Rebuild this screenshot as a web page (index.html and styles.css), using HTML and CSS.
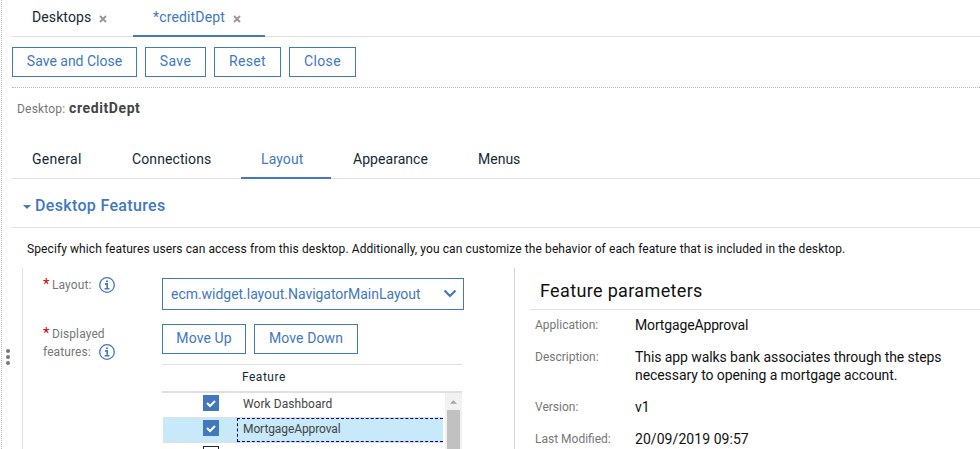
FILE: index.html
```html
<!DOCTYPE html>
<html lang="en">
<head>
<meta charset="utf-8">
<title>Desktops</title>
<link rel="stylesheet" href="styles.css">
</head>
<body>
<div class="app">
  <aside class="splitter"><i></i><i></i><i></i></aside>
  <main class="content">
    <nav class="doc-tabs">
      <a class="doc-tab"><span>Desktops</span><svg class="x" viewBox="0 0 8 8"><path d="M1 1l6 6M7 1L1 7"/></svg></a>
      <a class="doc-tab active"><span>*creditDept</span><svg class="x" viewBox="0 0 8 8"><path d="M1 1l6 6M7 1L1 7"/></svg></a>
    </nav>
    <div class="toolbar">
      <button class="btn w-sac">Save and Close</button>
      <button class="btn w-save">Save</button>
      <button class="btn w-reset">Reset</button>
      <button class="btn w-reset">Close</button>
    </div>
    <div class="title"><span class="label">Desktop:</span><b>creditDept</b></div>
    <nav class="tabs">
      <a class="general">General</a>
      <a class="connections">Connections</a>
      <a class="layout active">Layout</a>
      <a class="appearance">Appearance</a>
      <a class="menus">Menus</a>
    </nav>
    <h2 class="section"><svg viewBox="0 0 8 4"><path d="M0 0h8L4 4z"/></svg><span>Desktop Features</span></h2>
    <p class="intro">Specify which features users can access from this desktop. Additionally, you can customize the behavior of each feature that is included in the desktop.</p>
    <div class="panels">
      <section class="left">
        <div class="field">
          <div class="label field-label"><em>*</em>Layout:<svg class="info" viewBox="0 0 16 16"><circle cx="8" cy="8" r="7.3"/><path d="M6 6.9h2.2v4.6M5.6 11.7h4.8M7 4.2h2"/></svg></div>
          <div class="select"><span>ecm.widget.layout.NavigatorMainLayout</span><svg viewBox="0 0 14 9"><path d="M1.5 1.5L7 7l5.500-5.500"/></svg></div>
        </div>
        <div class="field features">
          <div class="label field-label"><em>*</em>Displayed<br>features:<svg class="info" viewBox="0 0 16 16"><circle cx="8" cy="8" r="7.3"/><path d="M6 6.9h2.2v4.6M5.6 11.7h4.8M7 4.2h2"/></svg></div>
          <div class="control">
            <div class="moves"><button class="btn w-up">Move Up</button><button class="btn w-down">Move Down</button></div>
            <div class="table">
              <div class="thead">Feature</div>
              <div class="tbody">
                <div class="rows">
                  <div class="row"><span class="check on"><svg viewBox="0 0 16 16"><path d="M4 8l3 3 5-5"/></svg></span><span class="cell">Work Dashboard</span></div>
                  <div class="row selected"><span class="check on"><svg viewBox="0 0 16 16"><path d="M4 8l3 3 5-5"/></svg></span><span class="cell app-name">MortgageApproval</span></div>
                  <div class="row"><span class="check"></span><span class="cell"></span></div>
                </div>
                <div class="scrollbar"><svg viewBox="0 0 8 4"><path d="M0 4h8L4 0z"/></svg><div class="thumb"></div></div>
              </div>
            </div>
          </div>
        </div>
      </section>
      <section class="right">
        <h3>Feature parameters</h3>
        <dl>
          <dt>Application:</dt><dd class="name">MortgageApproval</dd>
          <dt>Description:</dt><dd class="desc">This app walks bank associates through the steps<br>necessary to opening a mortgage account.</dd>
          <dt>Version:</dt><dd>v1</dd>
          <dt>Last Modified:</dt><dd>20/09/2019 09:57</dd>
        </dl>
      </section>
    </div>
  </main>
</div>
</body>
</html>
```
FILE: styles.css
```css
* { box-sizing: border-box; }
body { margin: 0; overflow: hidden; background: #fff; color: #152935; font: 14px/18px Roboto, "Liberation Sans", sans-serif; }
.app { display: flex; height: 449px; overflow: hidden; }
.splitter { width: 11px; margin-left: 1px; border-left: 1px dotted #bbb; display: flex; flex-direction: column; gap: 2px; padding: 349px 0 0 4px; flex: none; }
.splitter i { width: 4px; height: 4px; border-radius: 50%; background: #777; flex: none; }
.content { flex: 1; min-width: 0; }
.doc-tabs { display: flex; height: 37px; border-bottom: 1px solid #dfdfdf; }
.doc-tab { display: flex; width: 121px; height: 37px; padding: 8px 0 0 20px; letter-spacing: .1px; }
.doc-tab.active { width: 132px; color: #4178be; border-bottom: 2px solid #4178be; letter-spacing: .15px; }
.doc-tab span { width: 59px; white-space: nowrap; }
.doc-tab.active span { width: 72px; }
.x { width: 8px; height: 8px; margin: 7px 0 0 8px; }
.x path { stroke: #999; stroke-width: 2; fill: none; }
.toolbar { display: flex; gap: 8px; height: 51px; padding-top: 10px; border-bottom: 1px dotted #bbb; }
.btn { height: 30px; padding: 0 0 2px; border: 1px solid #4178be; background: #fff; color: #4178be; font: 14px/18px Roboto, "Liberation Sans", sans-serif; letter-spacing: .35px; white-space: nowrap; }
.w-sac { width: 125px; letter-spacing: 0; }
.w-save { width: 61px; }
.w-reset { width: 67px; }
.w-up { width: 84px; letter-spacing: .1px; }
.w-down { width: 104px; letter-spacing: .1px; }
.label, dt { color: #777; font-size: 12px; letter-spacing: .1px; }
.title { display: flex; align-items: baseline; height: 52px; padding: 11px 0 0 5px; }
.title .label { width: 52px; letter-spacing: .2px; }
.title b { color: #444; font-weight: 700; letter-spacing: .6px; }
.tabs { display: flex; height: 39px; border-bottom: 1px solid #dfdfdf; letter-spacing: .1px; }
.tabs a { height: 39px; padding: 10px 0 0 20px; }
.general { width: 100px; letter-spacing: .3px; }
.connections { width: 129px; }
.layout { width: 90px; }
.tabs .active { color: #4178be; border-bottom: 2px solid #4178be; }
.appearance { width: 126px; margin-left: 1px; }
.tabs .appearance { padding-left: 21px; letter-spacing: .05px; }
.menus { letter-spacing: 0; }
.section { display: flex; align-items: center; height: 49px; margin: 0; padding: 6px 0 0 11px; border-bottom: 1px solid #dfdfdf; color: #4178be; font-size: 16px; font-weight: 500; letter-spacing: .33px; }
.section svg { width: 8px; height: 4px; margin: 2px 4px 0 0; fill: #4178be; }
.intro { margin: 0; height: 40px; padding: 12px 0 0 15px; color: #111; font-size: 12px; letter-spacing: .092px; white-space: nowrap; }
.panels { display: flex; height: 181px; }
.left { width: 492px; margin-left: 10px; border-left: 1px solid #dfdfdf; }
.field { display: flex; padding: 10px 0 0 20px; height: 46px; }
.field-label { width: 119px; flex: none; margin-top: -2px; }
.field em { display: inline-block; width: 9px; color: #d00000; font: 400 15px/12px Roboto, sans-serif; letter-spacing: 0; }
.features { height: auto; }
.features .field-label { margin-top: 1px; }
.info { width: 16px; height: 16px; margin-left: 8px; vertical-align: -4px; fill: none; stroke: #4178be; stroke-width: 1.3; }
.info path { stroke-width: 1.6; }
.select { display: flex; justify-content: space-between; align-items: center; width: 302px; height: 32px; border: 1px solid #4178be; padding: 0 6px 1px 8px; color: #4178be; letter-spacing: -.03px; }
.select svg { width: 14px; height: 9px; fill: none; stroke: #4178be; stroke-width: 2.2; }
.moves { display: flex; gap: 8px; }
.table { width: 300px; margin-top: 10px; border-top: 1px solid #dfdfdf; }
.thead { height: 28px; padding: 3px 0 0 80px; border-bottom: 2px solid #dfdfdf; font-size: 12px; letter-spacing: .5px; }
.tbody { display: flex; height: 70px; overflow: hidden; }
.rows { width: 281px; margin-right: 2px; }
.row { display: flex; height: 25px; margin-left: 1px; padding: 2px 0 0 40px; border-bottom: 1px solid #dfdfdf; }
.row.selected { background: #c7e9fa; padding-top: 0; }
.check { width: 16px; height: 16px; border: 1px solid #152935; flex: none; margin-top: 1px; }
.row:first-child .check { margin-top: 0; }
.selected .check { margin-top: 2px; }
.check.on { border: 0; background: #4178be; }
.check svg { display: block; fill: none; stroke: #fff; stroke-width: 2; }
.cell { flex: 1; height: 24px; margin-left: 18px; padding: 1px 0 0 6px; color: #444; font-size: 12px; letter-spacing: .06px; }
.row:first-child .cell { padding-top: 0; }
.selected .cell { border: 1px dashed #00008b; border-right: 0; padding: 1px 0 0 5px; letter-spacing: -.1px; }
.scrollbar { width: 17px; background: #f1f1f1; padding: 7px 2px 0; }
.scrollbar svg { display: block; width: 7px; height: 4px; margin: 0 auto 6px 3px; fill: #a3a3a3; }
.thumb { height: 100px; background: #c1c1c1; }
.right { flex: 1; border-left: 1px solid #d5d5d5; }
h3 { height: 42px; margin: 0 0 0 15px; padding: 14px 0 0 10px; border-bottom: 1px solid #e0e0e0; color: #111; font-size: 18px; font-weight: 400; letter-spacing: .35px; }
dl { display: grid; grid-template-columns: 100px 1fr; row-gap: 14px; margin: 0; padding: 6px 0 0 20px; }
dt { padding-top: 1px; line-height: 17px; letter-spacing: 0; }
dd { margin: 0; line-height: 18px; color: #111; letter-spacing: .06px; white-space: nowrap; }
.name { letter-spacing: -.15px; }
.desc { letter-spacing: -.08px; }
```
